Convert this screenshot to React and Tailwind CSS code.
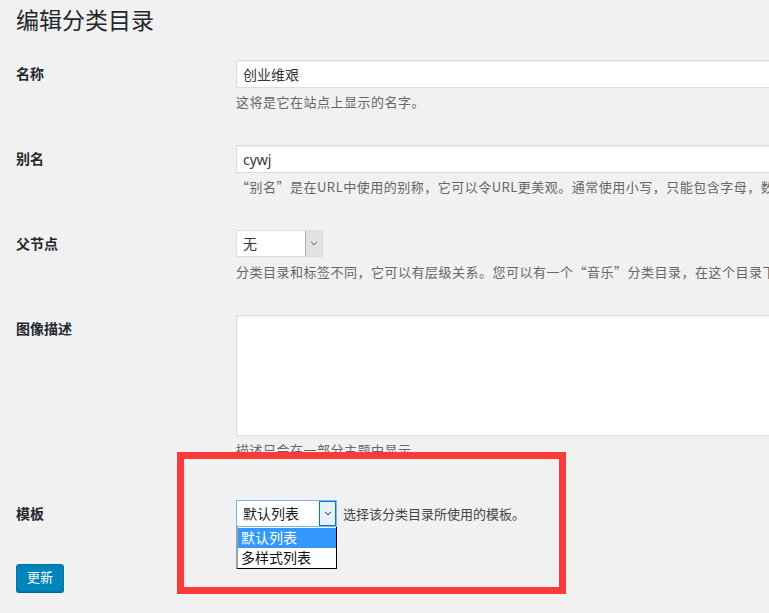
import React from 'react';

const font = { fontFamily: '"Noto Sans", "Noto Sans CJK SC", sans-serif' };

const Chevron = ({ className }) => (
  <svg viewBox="0 0 10 6" className={className} fill="none" stroke="currentColor" strokeWidth="1.2">
    <path d="M1.5 1.2 L5 4.6 L8.5 1.2" />
  </svg>
);

const Row = ({ label, children, pb = 'pb-[18px]' }) => (
  <div className={`flex ${pb}`}>
    <div className="w-[220px] shrink-0 pt-[20px] text-[14px] leading-[18px] font-semibold text-[#23282d]">{label}</div>
    <div className="pt-[15px] min-w-0 flex-1">{children}</div>
  </div>
);

// CJK font first so full-width punctuation keeps its width
const Desc = ({ children, mt = 'mt-[4px]' }) => (
  <p className={`${mt} font-['Noto_Sans_CJK_SC',sans-serif] text-[13px] tracking-[0.5px] leading-[20px] text-[#666] whitespace-nowrap`}>{children}</p>
);

const TextInput = ({ value }) => (
  <div className="w-[700px] h-[28px] bg-white border border-[#ddd] shadow-[inset_0_1px_2px_rgba(0,0,0,0.07)] px-[6px] flex items-center text-[14px] text-[#32373c]">
    {value}
  </div>
);

export default function App() {
  return (
    <div className="relative w-full h-[613px] overflow-hidden bg-[#f1f1f1] pl-[16px]" style={font}>
      <h1 className="pt-[5px] text-[23px] leading-[30px] font-normal text-[#23282d]">编辑分类目录</h1>

      <div className="mt-[10px]">
        <Row label="名称">
          <TextInput value="创业维艰" />
          <Desc>这将是它在站点上显示的名字。</Desc>
        </Row>

        <Row label="别名">
          <TextInput value="cywj" />
          <Desc>“别名”是在URL中使用的别称，它可以令URL更美观。通常使用小写，只能包含字母，数字和连字符（-）。</Desc>
        </Row>

        <Row label="父节点">
          <div className="w-[87px] h-[27px] bg-white border border-[#ddd] flex items-stretch">
            <div className="flex-1 flex items-center pl-[6px] text-[14px] text-[#32373c]">无</div>
            <div className="w-[17px] bg-[#e1e1e1] border-l border-[#adadad] flex items-center justify-center text-[#555]">
              <Chevron className="w-[8px] h-[5px]" />
            </div>
          </div>
          <Desc mt="mt-[5px]">分类目录和标签不同，它可以有层级关系。您可以有一个“音乐”分类目录，在这个目录下可以有叫做“流行”和“古典”的子目录。</Desc>
        </Row>

        <Row label="图像描述" pb="pb-[25px]">
          <div className="w-[700px] h-[121px] bg-white border border-[#ddd] shadow-[inset_0_1px_2px_rgba(0,0,0,0.07)]" />
          <Desc>描述只会在一部分主题中显示。</Desc>
        </Row>

        <Row label="模板" pb="pb-0">
          <div className="flex items-center">
            <div className="relative">
              <div className="w-[101px] h-[27px] bg-white border border-[#7eb4ea] flex items-stretch">
                <div className="flex-1 flex items-center pl-[6px] text-[14px] text-[#222]">默认列表</div>
                <div className="w-[17px] bg-[#e5f1fb] border-[1.5px] border-[#0078d7] flex items-center justify-center text-[#111]">
                  <Chevron className="w-[8px] h-[5px]" />
                </div>
              </div>
              <div className="absolute left-0 top-[27px] w-[101px] bg-white border-l-2 border-l-[#a0a0a0] border-r border-b border-r-black border-b-black text-[14px] leading-[20px] pt-[1px]">
                <div className="bg-[#3399ff] text-white pl-[3px]">默认列表</div>
                <div className="text-[#111] pl-[3px]">多样式列表</div>
              </div>
            </div>
            <span className="ml-[6px] font-['Noto_Sans_CJK_SC',sans-serif] text-[13px] text-[#444]">选择该分类目录所使用的模板。</span>
          </div>
        </Row>
      </div>

      <button className="mt-[37px] w-[48px] h-[28px] rounded-[3px] bg-[#0085ba] border border-[#0073aa] shadow-[0_1px_0_#006799] text-white text-[13px] flex items-center justify-center">
        更新
      </button>

      {/* red annotation box */}
      <div className="absolute left-[177px] top-[452px] w-[389px] h-[142px] border-[7px] border-[#fc3a3a]" />
    </div>
  );
}
